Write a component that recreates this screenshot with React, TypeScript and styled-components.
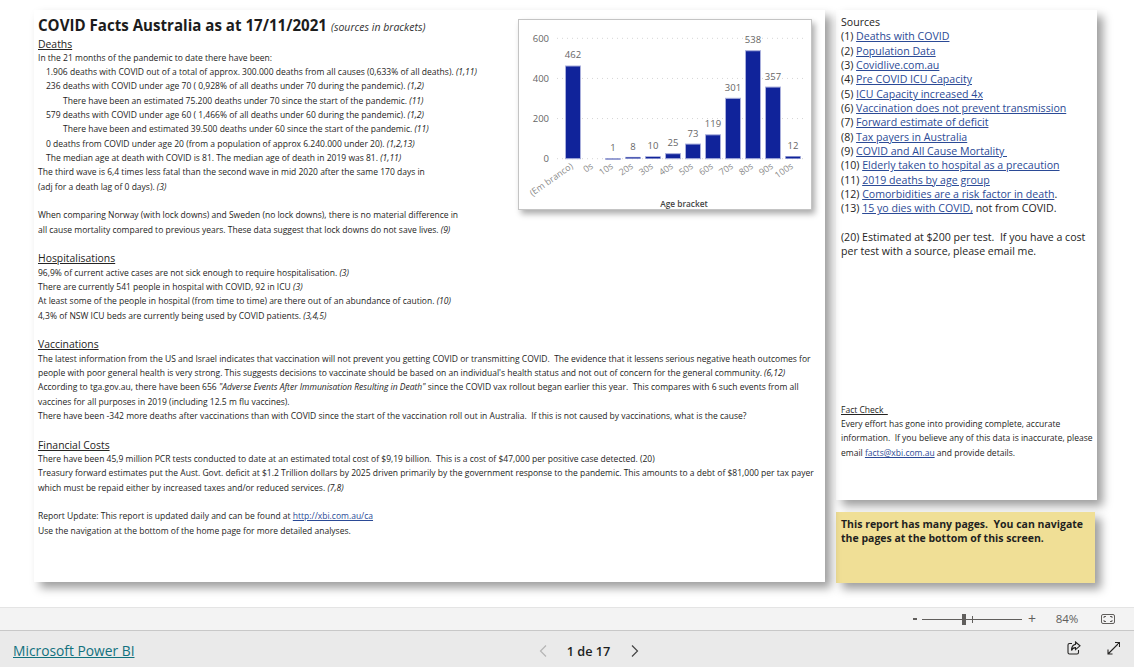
import React from 'react';
import styled, {createGlobalStyle} from 'styled-components';

const GlobalStyle = createGlobalStyle`
  html, body {
    margin: 0;
    padding: 0;
    background: #fff;
    overflow: hidden;
  }
  body {
    font-family: "Open Sans", "Noto Sans", sans-serif;
    color: #252423;
  }
`
const Page = styled.div`
  display: flex;
  flex-direction: column;
  width: 1134px;
  height: 667px;
`
const Canvas = styled.div`
  display: flex;
  align-items: flex-start;
  gap: 11px;
  height: 597px;
  padding: 10px 0 0 34px;
`
const Card = styled.div`
  background: #fff;
  box-shadow: 6px 6px 9px rgba(0, 0, 0, 0.38);
`
const MainCard = styled(Card)`
  position: relative;
  width: 787px;
  height: 563px;
  padding: 6px 0 3px 4px;
`
const TitleRow = styled.div`
  height: 20.5px;
  line-height: 19px;
  white-space: nowrap;
`
const Title = styled.span`
  font-size: 15.1px;
  font-weight: 700;
  color: #1c1c1c;
`
const SubTitle = styled.span`
  margin-left: 4px;
  font-size: 10.5px;
  font-style: italic;
  color: #333;
`
const Heading = styled.div`
  height: 14.33px;
  line-height: 14.33px;
  font-size: 10.4px;
  text-decoration: underline;
  white-space: pre;
`
const Line = styled.div<{$indent?: number}>`
  height: 14.33px;
  line-height: 14.33px;
  padding-left: ${({$indent}) => ($indent || 0)}px;
  font-size: 8.53px;
  white-space: pre;
`
const Blank = styled.div`
  height: 14.33px;
`
const Ref = styled.i`
  font-style: italic;
`
const TextLink = styled.a`
  color: #2b4a96;
  text-decoration: underline;
`
const ChartCard = styled.div`
  position: absolute;
  left: 484px;
  top: 9px;
  width: 292px;
  height: 189px;
  background: #fff;
  border: 1px solid #c4c4c4;
  box-shadow: 3px 4px 6px rgba(0, 0, 0, 0.32);
  svg {
    display: block;
  }
`
const Side = styled.div`
  display: flex;
  flex-direction: column;
  gap: 12px;
  width: 261px;
`
const SourcesCard = styled(Card)`
  display: flex;
  flex-direction: column;
  height: 485px;
  padding: 5px 0 0 5px;
`
const SourceLine = styled.div`
  height: 14.33px;
  line-height: 14.33px;
  font-size: 10.6px;
  white-space: pre;
`
const FactCheck = styled.div`
  margin-top: 144px;
`
const NoteCard = styled.div`
  width: 254px;
  height: 66px;
  padding: 5px 0 0 5px;
  background: #f0df96;
  box-shadow: 6px 6px 9px rgba(0, 0, 0, 0.38);
  font-size: 10.5px;
  font-weight: 700;
  line-height: 14.2px;
  color: #1f1f1f;
  white-space: pre;
`
const StatusBar = styled.div`
  display: flex;
  align-items: center;
  height: 22px;
  background: #f3f3f3;
  border-top: 1px solid #e4e4e4;
  border-bottom: 1px solid #c8c8c8;
  color: #605e5c;
`
const ZoomMinus = styled.span`
  width: 4px;
  height: 2px;
  margin-left: 913px;
  background: #605e5c;
`
const ZoomTrack = styled.div`
  position: relative;
  width: 100px;
  height: 1px;
  margin-left: 5px;
  background: #605e5c;
`
const ZoomThumb = styled.span`
  position: absolute;
  left: 40px;
  top: -5px;
  width: 4px;
  height: 11px;
  background: #605e5c;
`
const ZoomTick = styled.span`
  position: absolute;
  left: 50px;
  top: -3px;
  width: 1px;
  height: 7px;
  background: #605e5c;
`
const ZoomPlus = styled.span`
  width: 20px;
  font-size: 14px;
  line-height: 20px;
  text-align: center;
`
const ZoomValue = styled.span`
  width: 40px;
  margin-top: -1px;
  margin-left: 5px;
  font-size: 11.5px;
  text-align: center;
`
const FitButton = styled.span`
  display: flex;
  margin-left: 14px;
`
const Footer = styled.div`
  position: relative;
  display: flex;
  align-items: center;
  justify-content: space-between;
  flex: 1;
  padding: 0 14px 0 13px;
  background: #eaeaea;
`
const BrandLink = styled.a`
  margin-top: 3px;
  font-size: 13.8px;
  color: #11717e;
  text-decoration: underline;
`
const Pager = styled.div`
  position: absolute;
  left: 538px;
  top: 11px;
  display: flex;
  align-items: center;
`
const PageLabel = styled.span`
  width: 81px;
  font-size: 12.7px;
  font-weight: 600;
  color: #201f1e;
  text-align: center;
`
const FooterActions = styled.div`
  display: flex;
  align-items: center;
  gap: 26px;
  margin-top: -2px;
`

type SourceItem = {num: number; label: string; tail?: string}
const sources: SourceItem[] = [
	{num: 1, label: 'Deaths with COVID'},
	{num: 2, label: 'Population Data'},
	{num: 3, label: 'Covidlive.com.au'},
	{num: 4, label: 'Pre COVID ICU Capacity'},
	{num: 5, label: 'ICU Capacity increased 4x'},
	{num: 6, label: 'Vaccination does not prevent transmission'},
	{num: 7, label: 'Forward estimate of deficit'},
	{num: 8, label: 'Tax payers in Australia'},
	{num: 9, label: 'COVID and All Cause Mortality '},
	{num: 10, label: 'Elderly taken to hospital as a precaution'},
	{num: 11, label: '2019 deaths by age group'},
	{num: 12, label: 'Comorbidities are a risk factor in death', tail: '.'},
	{num: 13, label: '15 yo dies with COVID,', tail: ' not from COVID.'},
]

const bars = [
	{label: '(Em branco)', value: 462},
	{label: '0s', value: 0},
	{label: '10s', value: 1},
	{label: '20s', value: 8},
	{label: '30s', value: 10},
	{label: '40s', value: 25},
	{label: '50s', value: 73},
	{label: '60s', value: 119},
	{label: '70s', value: 301},
	{label: '80s', value: 538},
	{label: '90s', value: 357},
	{label: '100s', value: 12},
]

const AgeChart = () => {
	const base = 158.7
	const scale = 120.4 / 600
	return (
		<svg width={292} height={189} viewBox="519 20 292 189" fontFamily='"Open Sans", sans-serif'>
			{[0, 200, 400, 600].map((tick) => {
				const y = base - tick * scale
				return (
					<g key={tick}>
						<line x1={557} x2={806} y1={y} y2={y} stroke="#d5d5d5" strokeDasharray="1 4" />
						<text x={549} y={y + 3.5} textAnchor="end" fontSize={9.5} fill="#666">{tick}</text>
					</g>
				)
			})}
			{bars.map((bar, i) => {
				const x = 565 + i * 20
				const h = bar.value * scale
				return (
					<g key={bar.label}>
						{bar.value > 0 && (
							<>
								<rect x={x + 0.5} y={base - h} width={15} height={Math.max(h, 1)} fill="#10239a" stroke="#a9afdc" strokeWidth={h < 4 ? 0.5 : 1} />
								<text x={x + 8} y={base - h - 7.5} textAnchor="middle" fontSize={9.5} fill="#666">{bar.value}</text>
							</>
						)}
						<text x={x + 7} y={168} textAnchor="end" fontSize={9} fill="#8a8a8a" transform={`rotate(-35 ${x + 7} 165)`}>{bar.label}</text>
					</g>
				)
			})}
			<text x={684} y={206.5} textAnchor="middle" fontSize={8.3} fontWeight={600} fill="#444">Age bracket</text>
		</svg>
	)
}

const App = () => {
	return (
		<Page>
			<GlobalStyle />
			<Canvas>
				<MainCard>
					<TitleRow>
						<Title>COVID Facts Australia as at 17/11/2021</Title>
						<SubTitle>(sources in brackets)</SubTitle>
					</TitleRow>
					<Heading>Deaths</Heading>
					<Line>In the 21 months of the pandemic to date there have been:</Line>
					<Line $indent={8}>1.906 deaths with COVID out of a total of approx. 300.000 deaths from all causes (0,633% of all deaths). <Ref>(1,11)</Ref></Line>
					<Line $indent={8}>236 deaths with COVID under age 70 ( 0,928% of all deaths under 70 during the pandemic). <Ref>(1,2)</Ref></Line>
					<Line $indent={25}>There have been an estimated 75.200 deaths under 70 since the start of the pandemic. <Ref>(11)</Ref></Line>
					<Line $indent={8}>579 deaths with COVID under age 60 ( 1,466% of all deaths under 60 during the pandemic). <Ref>(1,2)</Ref></Line>
					<Line $indent={25}>There have been and estimated 39.500 deaths under 60 since the start of the pandemic. <Ref>(11)</Ref></Line>
					<Line $indent={8}>0 deaths from COVID under age 20 (from a population of approx 6.240.000 under 20). <Ref>(1,2,13)</Ref></Line>
					<Line $indent={8}>The median age at death with COVID is 81. The median age of death in 2019 was 81. <Ref>(1,11)</Ref></Line>
					<Line>The third wave is 6,4 times less fatal than the second wave in mid 2020 after the same 170 days in</Line>
					<Line>(adj for a death lag of 0 days). <Ref>(3)</Ref></Line>
					<Blank />
					<Line>When comparing Norway (with lock downs) and Sweden (no lock downs), there is no material difference in</Line>
					<Line>all cause mortality compared to previous years. These data suggest that lock downs do not save lives. <Ref>(9)</Ref></Line>
					<Blank />
					<Heading>Hospitalisations</Heading>
					<Line>96,9% of current active cases are not sick enough to require hospitalisation. <Ref>(3)</Ref></Line>
					<Line>There are currently 541 people in hospital with COVID, 92 in ICU <Ref>(3)</Ref></Line>
					<Line>At least some of the people in hospital (from time to time) are there out of an abundance of caution. <Ref>(10)</Ref></Line>
					<Line>4,3% of NSW ICU beds are currently being used by COVID patients. <Ref>(3,4,5)</Ref></Line>
					<Blank />
					<Heading>Vaccinations</Heading>
					<Line>The latest information from the US and Israel indicates that vaccination will not prevent you getting COVID or transmitting COVID.  The evidence that it lessens serious negative heath outcomes for</Line>
					<Line>people with poor general health is very strong. This suggests decisions to vaccinate should be based on an individual's health status and not out of concern for the general community. <Ref>(6,12)</Ref></Line>
					<Line>According to tga.gov.au, there have been 656 <Ref>"Adverse Events After Immunisation Resulting in Death"</Ref> since the COVID vax rollout began earlier this year.  This compares with 6 such events from all</Line>
					<Line>vaccines for all purposes in 2019 (including 12.5 m flu vaccines).</Line>
					<Line>There have been -342 more deaths after vaccinations than with COVID since the start of the vaccination roll out in Australia.  If this is not caused by vaccinations, what is the cause?</Line>
					<Blank />
					<Heading>Financial Costs</Heading>
					<Line>There have been 45,9 million PCR tests conducted to date at an estimated total cost of $9,19 billion.  This is a cost of $47,000 per positive case detected. (20)</Line>
					<Line>Treasury forward estimates put the Aust. Govt. deficit at $1.2 Trillion dollars by 2025 driven primarily by the government response to the pandemic. This amounts to a debt of $81,000 per tax payer</Line>
					<Line>which must be repaid either by increased taxes and/or reduced services. <Ref>(7,8)</Ref></Line>
					<Blank />
					<Line>Report Update: This report is updated daily and can be found at <TextLink>http://xbi.com.au/ca</TextLink></Line>
					<Line>Use the navigation at the bottom of the home page for more detailed analyses.</Line>
					<ChartCard>
						<AgeChart />
					</ChartCard>
				</MainCard>
				<Side>
					<SourcesCard>
						<SourceLine>Sources</SourceLine>
						{sources.map((s) => (
							<SourceLine key={s.num}>({s.num}) <TextLink>{s.label}</TextLink>{s.tail}</SourceLine>
						))}
						<SourceLine />
						<SourceLine>(20) Estimated at $200 per test.  If you have a cost</SourceLine>
						<SourceLine>per test with a source, please email me.</SourceLine>
						<FactCheck>
							<Line><u>Fact Check  </u></Line>
							<Line>Every effort has gone into providing complete, accurate</Line>
							<Line>information.  If you believe any of this data is inaccurate, please</Line>
							<Line>email <TextLink>facts@xbi.com.au</TextLink> and provide details.</Line>
						</FactCheck>
					</SourcesCard>
					<NoteCard>{'This report has many pages.  You can navigate\nthe pages at the bottom of this screen.'}</NoteCard>
				</Side>
			</Canvas>
			<StatusBar>
				<ZoomMinus />
				<ZoomTrack>
					<ZoomThumb />
					<ZoomTick />
				</ZoomTrack>
				<ZoomPlus>+</ZoomPlus>
				<ZoomValue>84%</ZoomValue>
				<FitButton>
					<svg width="14" height="10" viewBox="0 0 14 10" fill="none" stroke="#605e5c">
						<rect x="0.5" y="0.5" width="13" height="9" rx="1.5" />
						<path d="M3 4V2.5H5M9 2.5H11V4M11 6V7.5H9M5 7.5H3V6" />
					</svg>
				</FitButton>
			</StatusBar>
			<Footer>
				<BrandLink>Microsoft Power BI</BrandLink>
				<Pager>
					<svg width="10" height="14" viewBox="0 0 10 14" fill="none" stroke="#b5b5b5" strokeWidth="1.2">
						<path d="M8 1.5L2.5 7L8 12.5" />
					</svg>
					<PageLabel>1 de 17</PageLabel>
					<svg width="10" height="14" viewBox="0 0 10 14" fill="none" stroke="#444" strokeWidth="1.2">
						<path d="M3 1.5L8.5 7L3 12.5" />
					</svg>
				</Pager>
				<FooterActions>
					<svg width="14" height="14" viewBox="0 0 14 14" fill="none" stroke="#252423" strokeWidth="1.1">
						<path d="M5 2.5H2.5A1.5 1.5 0 0 0 1 4V11.5A1.5 1.5 0 0 0 2.5 13H10A1.5 1.5 0 0 0 11.5 11.5V9" />
						<path d="M8.5 1L13 4.8L8.5 8.6V6.6C6.7 6.6 5.2 7.7 4.5 9.6C4.5 6.4 6.1 3.8 8.5 3.4Z" />
					</svg>
					<svg width="13" height="14" viewBox="0 0 13 14" fill="none" stroke="#252423" strokeWidth="1.1">
						<path d="M1 13L12 2M8 1.5H12.5V6M1 8.5V13H5.5" />
					</svg>
				</FooterActions>
			</Footer>
		</Page>
	);
};

export default App;
